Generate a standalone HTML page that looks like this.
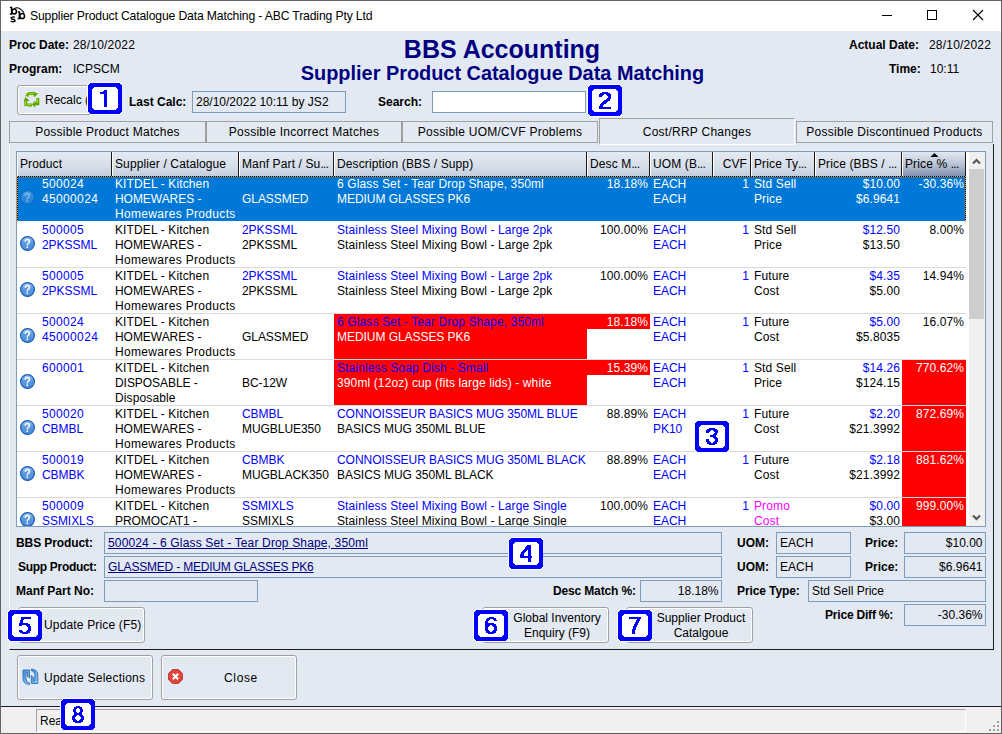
<!DOCTYPE html>
<html><head><meta charset="utf-8"><style>
*{box-sizing:border-box;margin:0;padding:0}
html,body{width:1002px;height:734px;overflow:hidden;background:#E3E9F2}
body{position:relative;font-family:"Liberation Sans",sans-serif;font-size:12px;color:#000;line-height:15px}
.a{position:absolute;white-space:nowrap}
.b{font-weight:bold}
.tbox{position:absolute;border:1px solid #7F9DB9;height:22px;padding:0 0 0 3px;line-height:20px;white-space:nowrap;overflow:hidden}
.btn{position:absolute;border:1px solid #a0a0a0;border-radius:3px;background:#E3E9F2;box-shadow:inset 0 0 0 1px #fff}
.badge{position:absolute;width:34px;height:31px;background:#00f;border-radius:4px;box-shadow:0 0 0 1px #fff}
.badge i{position:absolute;left:4px;top:4px;width:26px;height:23px;background:#fff;border-radius:3px;font-style:normal;color:#00f;font-weight:bold;font-size:23px;line-height:23px;text-align:center}
.tab{position:absolute;height:22px;border:1px solid #a0a0a0;background:#E3E9F2;text-align:center;line-height:20px;letter-spacing:0.25px}
.hd{position:absolute;top:0;height:24px;line-height:23px;padding-left:4px;border-right:1px solid #1e1e1e;overflow:hidden;white-space:nowrap}
.cell{position:absolute;overflow:hidden;white-space:nowrap;line-height:15px}
.bl{color:#0000ff}
.mg{color:#ff00ff}
.r{text-align:right}
</style></head><body>
<div class="a" style="left:0px;top:0px;width:1002px;height:734px;background:#E3E9F2"></div>
<div class="a" style="left:0px;top:0px;width:1002px;height:31px;background:#fff"></div>
<div class="a" style="left:0px;top:0px;width:1002px;height:1px;background:#646464"></div>
<div class="a" style="left:0px;top:0px;width:1px;height:734px;background:#646464"></div>
<div class="a" style="left:1001px;top:0px;width:1px;height:734px;background:#646464"></div>
<div class="a" style="left:0px;top:733px;width:1002px;height:1px;background:#646464"></div>
<div class="a " style="left:30px;top:8.5px;font-size:12.2px;letter-spacing:-0.15px">Supplier Product Catalogue Data Matching - ABC Trading Pty Ltd</div>
<svg class="a" style="left:0px;top:0px" width="30" height="30" viewBox="0 0 30 30">
<g fill="none" stroke="#000" stroke-width="1.5">
<path d="M11.6 7 V14.3 M9.9 7.6 H12.3 M9.9 14.1 H12.3"/><ellipse cx="14.2" cy="11.5" rx="2.2" ry="2.5"/>
<path d="M19.4 11.3 V18.7 M17.7 11.9 H20.1 M17.7 18.5 H20.1"/><ellipse cx="22.2" cy="16" rx="2.3" ry="2.6"/>
<path d="M15 17.3 Q13 16.3 11.3 17.5 Q10.8 19 13 19.3 Q15.3 19.7 15 21 Q13.5 22.4 10.6 21.2" stroke-width="1.4"/>
<path d="M14.3 8.6 Q18.5 5.6 24 12.6" stroke-width="1.1"/>
</g>
</svg>
<div class="a" style="left:882px;top:15px;width:10px;height:1px;background:#000"></div>
<div class="a" style="left:927px;top:10px;width:10px;height:10px;border:1px solid #000"></div>
<svg class="a" style="left:972px;top:9px" width="12" height="12" viewBox="0 0 12 12"><path d="M1 1L11 11M11 1L1 11" stroke="#000" stroke-width="1.1"/></svg>
<div class="a b" style="left:9px;top:38px;">Proc Date:</div>
<div class="a " style="left:73px;top:38px;letter-spacing:0.2px">28/10/2022</div>
<div class="a b" style="left:9px;top:62px;">Program:</div>
<div class="a " style="left:73px;top:62px;">ICPSCM</div>
<div class="a b" style="left:1px;top:35px;width:1002px;text-align:center;font-size:25px;line-height:28px;color:#000080">BBS Accounting</div>
<div class="a b" style="left:1.5px;top:62px;width:1002px;text-align:center;font-size:19.9px;line-height:22px;color:#000080">Supplier Product Catalogue Data Matching</div>
<div class="a b" style="left:849px;top:38px;">Actual Date:</div>
<div class="a " style="left:929px;top:38px;letter-spacing:0.2px">28/10/2022</div>
<div class="a b" style="left:889px;top:62px;">Time:</div>
<div class="a " style="left:930px;top:62px;">10:11</div>
<div class="btn" style="left:17px;top:85px;width:90px;height:30px"></div>
<div class="a " style="left:45px;top:93px;">Recalc (F</div>
<div class="a b" style="left:129px;top:95px;">Last Calc:</div>
<div class="tbox" style="left:192px;top:91px;width:154px;height:22px;padding-left:3px">28/10/2022 10:11 by JS2</div>
<div class="a b" style="left:378px;top:95px;">Search:</div>
<div class="tbox" style="left:432px;top:91px;width:154px;height:22px;background:#fff"></div>
<div class="tab" style="left:9px;top:121px;width:197px">Possible Product Matches</div>
<div class="tab" style="left:206px;top:121px;width:196px">Possible Incorrect Matches</div>
<div class="tab" style="left:402px;top:121px;width:196px">Possible UOM/CVF Problems</div>
<div class="tab" style="left:599px;top:118px;width:196px;height:27px;line-height:26px;border-right-color:#fff;border-bottom-color:#fff;z-index:2">Cost/RRP Changes</div>
<div class="tab" style="left:796px;top:121px;width:197px">Possible Discontinued Products</div>
<div class="a" style="left:9px;top:144px;width:985px;height:506px;border-left:1px solid #fff;border-right:1px solid #1e1e1e;border-bottom:1px solid #1e1e1e"></div>
<div class="a" style="left:16px;top:151px;width:970px;height:376px;background:#fff;border:1px solid #7F9DB9"></div>
<div class="a" style="left:17px;top:152px;width:95px;height:24px;background:linear-gradient(#E4EAF2,#D6DEE9 60%,#C3CEDD);border-left:1px solid #fff;overflow:hidden"></div>
<div class="a" style="left:17px;top:152px;width:94px;height:24px;line-height:24px;padding-left:3px;letter-spacing:0.12px;">Product</div>
<div class="a" style="left:111px;top:152px;width:1px;height:24px;background:#1a1a1a"></div>
<div class="a" style="left:112px;top:152px;width:127px;height:24px;background:linear-gradient(#E4EAF2,#D6DEE9 60%,#C3CEDD);border-left:1px solid #fff;overflow:hidden"></div>
<div class="a" style="left:112px;top:152px;width:126px;height:24px;line-height:24px;padding-left:3px;letter-spacing:0.12px;">Supplier / Catalogue</div>
<div class="a" style="left:238px;top:152px;width:1px;height:24px;background:#1a1a1a"></div>
<div class="a" style="left:239px;top:152px;width:95px;height:24px;background:linear-gradient(#E4EAF2,#D6DEE9 60%,#C3CEDD);border-left:1px solid #fff;overflow:hidden"></div>
<div class="a" style="left:239px;top:152px;width:94px;height:24px;line-height:24px;padding-left:3px;letter-spacing:0.12px;">Manf Part / Su<span style="letter-spacing:-0.6px">...</span></div>
<div class="a" style="left:333px;top:152px;width:1px;height:24px;background:#1a1a1a"></div>
<div class="a" style="left:334px;top:152px;width:253px;height:24px;background:linear-gradient(#E4EAF2,#D6DEE9 60%,#C3CEDD);border-left:1px solid #fff;overflow:hidden"></div>
<div class="a" style="left:334px;top:152px;width:252px;height:24px;line-height:24px;padding-left:3px;letter-spacing:0.12px;">Description (BBS / Supp)</div>
<div class="a" style="left:586px;top:152px;width:1px;height:24px;background:#1a1a1a"></div>
<div class="a" style="left:587px;top:152px;width:63px;height:24px;background:linear-gradient(#E4EAF2,#D6DEE9 60%,#C3CEDD);border-left:1px solid #fff;overflow:hidden"></div>
<div class="a" style="left:587px;top:152px;width:62px;height:24px;line-height:24px;padding-left:3px;letter-spacing:0.12px;">Desc M<span style="letter-spacing:-0.6px">...</span></div>
<div class="a" style="left:649px;top:152px;width:1px;height:24px;background:#1a1a1a"></div>
<div class="a" style="left:650px;top:152px;width:63px;height:24px;background:linear-gradient(#E4EAF2,#D6DEE9 60%,#C3CEDD);border-left:1px solid #fff;overflow:hidden"></div>
<div class="a" style="left:650px;top:152px;width:62px;height:24px;line-height:24px;padding-left:3px;letter-spacing:0.12px;">UOM (B<span style="letter-spacing:-0.6px">...</span></div>
<div class="a" style="left:712px;top:152px;width:1px;height:24px;background:#1a1a1a"></div>
<div class="a" style="left:713px;top:152px;width:38px;height:24px;background:linear-gradient(#E4EAF2,#D6DEE9 60%,#C3CEDD);border-left:1px solid #fff;overflow:hidden"></div>
<div class="a" style="left:713px;top:152px;width:37px;height:24px;line-height:24px;padding-left:3px;letter-spacing:0.12px;text-align:right;padding-right:3px;padding-left:0">CVF</div>
<div class="a" style="left:750px;top:152px;width:1px;height:24px;background:#1a1a1a"></div>
<div class="a" style="left:751px;top:152px;width:64px;height:24px;background:linear-gradient(#E4EAF2,#D6DEE9 60%,#C3CEDD);border-left:1px solid #fff;overflow:hidden"></div>
<div class="a" style="left:751px;top:152px;width:63px;height:24px;line-height:24px;padding-left:3px;letter-spacing:0.12px;">Price Ty<span style="letter-spacing:-0.6px">...</span></div>
<div class="a" style="left:814px;top:152px;width:1px;height:24px;background:#1a1a1a"></div>
<div class="a" style="left:815px;top:152px;width:87px;height:24px;background:linear-gradient(#E4EAF2,#D6DEE9 60%,#C3CEDD);border-left:1px solid #fff;overflow:hidden"></div>
<div class="a" style="left:815px;top:152px;width:86px;height:24px;line-height:24px;padding-left:3px;letter-spacing:0.12px;">Price (BBS / <span style="letter-spacing:-0.6px">...</span></div>
<div class="a" style="left:901px;top:152px;width:1px;height:24px;background:#1a1a1a"></div>
<div class="a" style="left:902px;top:152px;width:64px;height:24px;background:linear-gradient(#E2E8F0,#BAC5D5 50%,#8292AD);border-left:1px solid #fff;overflow:hidden"></div>
<div class="a" style="left:902px;top:152px;width:63px;height:24px;line-height:24px;padding-left:3px;letter-spacing:0.12px;">Price % <span style="letter-spacing:-0.6px">...</span></div>
<div class="a" style="left:965px;top:152px;width:1px;height:24px;background:#1a1a1a"></div>
<svg class="a" style="left:930px;top:152px" width="9" height="6"><path d="M0.5 5L4.5 1L8.5 5Z" fill="#000"/></svg>
<div class="a" style="left:17px;top:176px;width:969px;height:350px;overflow:hidden">
<div class="a" style="left:0px;top:0px;width:949px;height:45px;background:#0078D7"></div>
<svg class="a" style="left:3px;top:14px;opacity:0.5;" width="16" height="16" viewBox="0 0 16 16"><defs><linearGradient id="qg0" x1="0" y1="0" x2="0" y2="1"><stop offset="0" stop-color="#9CC4EE"/><stop offset="0.45" stop-color="#5A9BE0"/><stop offset="1" stop-color="#4A8AD6"/></linearGradient></defs><circle cx="7.5" cy="7.5" r="6.9" fill="url(#qg0)" stroke="#1A5CB8" stroke-width="1.2"/><path d="M5.2 5.8 Q5.2 3.6 7.3 3.6 Q9.4 3.6 9.4 5.6 Q9.4 6.9 8 7.7 Q7.3 8.1 7.3 9.4" fill="none" stroke="#fff" stroke-width="1.5"/><rect x="6.5" y="10.4" width="1.6" height="1.7" fill="#fff"/></svg>
<div class="a" style="left:25px;top:1px;color:#fff;letter-spacing:0.35px">500024</div>
<div class="a" style="left:25px;top:16px;color:#fff;letter-spacing:0.35px">45000024</div>
<div class="a" style="left:98px;top:1px;color:#fff;letter-spacing:0.12px">KITDEL - Kitchen</div>
<div class="a" style="left:98px;top:16px;color:#fff;letter-spacing:-0.05px">HOMEWARES -</div>
<div class="a" style="left:98px;top:31px;color:#fff;letter-spacing:0.33px">Homewares Products</div>
<div class="a" style="left:225px;top:16px;color:#fff;letter-spacing:-0.05px">GLASSMED</div>
<div class="a" style="left:320px;top:1px;color:#fff;letter-spacing:0.12px">6 Glass Set - Tear Drop Shape, 350ml</div>
<div class="a" style="left:320px;top:16px;color:#fff;letter-spacing:-0.05px">MEDIUM GLASSES PK6</div>
<div class="a" style="left:570px;width:61px;text-align:right;top:1px;color:#fff;letter-spacing:0.1px">18.18%</div>
<div class="a" style="left:636px;top:1px;color:#fff;letter-spacing:-0.05px">EACH</div>
<div class="a" style="left:636px;top:16px;color:#fff;letter-spacing:-0.05px">EACH</div>
<div class="a" style="left:696px;width:36px;text-align:right;top:1px;color:#fff;letter-spacing:0.1px">1</div>
<div class="a" style="left:737px;top:1px;color:#fff;letter-spacing:0.12px">Std Sell</div>
<div class="a" style="left:737px;top:16px;color:#fff;letter-spacing:0.12px">Price</div>
<div class="a" style="left:798px;width:85px;text-align:right;top:1px;color:#fff;letter-spacing:0.1px">$10.00</div>
<div class="a" style="left:798px;width:85px;text-align:right;top:16px;color:#fff;letter-spacing:0.1px">$6.9641</div>
<div class="a" style="left:885px;width:62px;text-align:right;top:1px;color:#fff;letter-spacing:0.1px">-30.36%</div>
<div class="a" style="left:0px;top:91px;width:949px;height:1px;background:#dadada"></div>
<svg class="a" style="left:3px;top:60px;" width="16" height="16" viewBox="0 0 16 16"><defs><linearGradient id="qg1" x1="0" y1="0" x2="0" y2="1"><stop offset="0" stop-color="#9CC4EE"/><stop offset="0.45" stop-color="#5A9BE0"/><stop offset="1" stop-color="#4A8AD6"/></linearGradient></defs><circle cx="7.5" cy="7.5" r="6.9" fill="url(#qg1)" stroke="#1A5CB8" stroke-width="1.2"/><path d="M5.2 5.8 Q5.2 3.6 7.3 3.6 Q9.4 3.6 9.4 5.6 Q9.4 6.9 8 7.7 Q7.3 8.1 7.3 9.4" fill="none" stroke="#fff" stroke-width="1.5"/><rect x="6.5" y="10.4" width="1.6" height="1.7" fill="#fff"/></svg>
<div class="a" style="left:25px;top:47px;color:#0000ff;letter-spacing:0.35px">500005</div>
<div class="a" style="left:25px;top:62px;color:#0000ff;letter-spacing:-0.05px">2PKSSML</div>
<div class="a" style="left:98px;top:47px;color:#000;letter-spacing:0.12px">KITDEL - Kitchen</div>
<div class="a" style="left:98px;top:62px;color:#000;letter-spacing:-0.05px">HOMEWARES -</div>
<div class="a" style="left:98px;top:77px;color:#000;letter-spacing:0.33px">Homewares Products</div>
<div class="a" style="left:225px;top:47px;color:#0000ff;letter-spacing:-0.05px">2PKSSML</div>
<div class="a" style="left:225px;top:62px;color:#000;letter-spacing:-0.05px">2PKSSML</div>
<div class="a" style="left:320px;top:47px;color:#0000ff;letter-spacing:0.12px">Stainless Steel Mixing Bowl - Large 2pk</div>
<div class="a" style="left:320px;top:62px;color:#000;letter-spacing:0.12px">Stainless Steel Mixing Bowl - Large 2pk</div>
<div class="a" style="left:570px;width:61px;text-align:right;top:47px;color:#000;letter-spacing:0.1px">100.00%</div>
<div class="a" style="left:636px;top:47px;color:#0000ff;letter-spacing:-0.05px">EACH</div>
<div class="a" style="left:636px;top:62px;color:#0000ff;letter-spacing:-0.05px">EACH</div>
<div class="a" style="left:696px;width:36px;text-align:right;top:47px;color:#0000ff;letter-spacing:0.1px">1</div>
<div class="a" style="left:737px;top:47px;color:#000;letter-spacing:0.12px">Std Sell</div>
<div class="a" style="left:737px;top:62px;color:#000;letter-spacing:0.12px">Price</div>
<div class="a" style="left:798px;width:85px;text-align:right;top:47px;color:#0000ff;letter-spacing:0.1px">$12.50</div>
<div class="a" style="left:798px;width:85px;text-align:right;top:62px;color:#000;letter-spacing:0.1px">$13.50</div>
<div class="a" style="left:885px;width:62px;text-align:right;top:47px;color:#000;letter-spacing:0.1px">8.00%</div>
<div class="a" style="left:0px;top:137px;width:949px;height:1px;background:#dadada"></div>
<svg class="a" style="left:3px;top:106px;" width="16" height="16" viewBox="0 0 16 16"><defs><linearGradient id="qg2" x1="0" y1="0" x2="0" y2="1"><stop offset="0" stop-color="#9CC4EE"/><stop offset="0.45" stop-color="#5A9BE0"/><stop offset="1" stop-color="#4A8AD6"/></linearGradient></defs><circle cx="7.5" cy="7.5" r="6.9" fill="url(#qg2)" stroke="#1A5CB8" stroke-width="1.2"/><path d="M5.2 5.8 Q5.2 3.6 7.3 3.6 Q9.4 3.6 9.4 5.6 Q9.4 6.9 8 7.7 Q7.3 8.1 7.3 9.4" fill="none" stroke="#fff" stroke-width="1.5"/><rect x="6.5" y="10.4" width="1.6" height="1.7" fill="#fff"/></svg>
<div class="a" style="left:25px;top:93px;color:#0000ff;letter-spacing:0.35px">500005</div>
<div class="a" style="left:25px;top:108px;color:#0000ff;letter-spacing:-0.05px">2PKSSML</div>
<div class="a" style="left:98px;top:93px;color:#000;letter-spacing:0.12px">KITDEL - Kitchen</div>
<div class="a" style="left:98px;top:108px;color:#000;letter-spacing:-0.05px">HOMEWARES -</div>
<div class="a" style="left:98px;top:123px;color:#000;letter-spacing:0.33px">Homewares Products</div>
<div class="a" style="left:225px;top:93px;color:#0000ff;letter-spacing:-0.05px">2PKSSML</div>
<div class="a" style="left:225px;top:108px;color:#000;letter-spacing:-0.05px">2PKSSML</div>
<div class="a" style="left:320px;top:93px;color:#0000ff;letter-spacing:0.12px">Stainless Steel Mixing Bowl - Large 2pk</div>
<div class="a" style="left:320px;top:108px;color:#000;letter-spacing:0.12px">Stainless Steel Mixing Bowl - Large 2pk</div>
<div class="a" style="left:570px;width:61px;text-align:right;top:93px;color:#000;letter-spacing:0.1px">100.00%</div>
<div class="a" style="left:636px;top:93px;color:#0000ff;letter-spacing:-0.05px">EACH</div>
<div class="a" style="left:636px;top:108px;color:#0000ff;letter-spacing:-0.05px">EACH</div>
<div class="a" style="left:696px;width:36px;text-align:right;top:93px;color:#0000ff;letter-spacing:0.1px">1</div>
<div class="a" style="left:737px;top:93px;color:#000;letter-spacing:0.12px">Future</div>
<div class="a" style="left:737px;top:108px;color:#000;letter-spacing:0.12px">Cost</div>
<div class="a" style="left:798px;width:85px;text-align:right;top:93px;color:#0000ff;letter-spacing:0.1px">$4.35</div>
<div class="a" style="left:798px;width:85px;text-align:right;top:108px;color:#000;letter-spacing:0.1px">$5.00</div>
<div class="a" style="left:885px;width:62px;text-align:right;top:93px;color:#000;letter-spacing:0.1px">14.94%</div>
<div class="a" style="left:0px;top:183px;width:949px;height:1px;background:#dadada"></div>
<svg class="a" style="left:3px;top:152px;" width="16" height="16" viewBox="0 0 16 16"><defs><linearGradient id="qg3" x1="0" y1="0" x2="0" y2="1"><stop offset="0" stop-color="#9CC4EE"/><stop offset="0.45" stop-color="#5A9BE0"/><stop offset="1" stop-color="#4A8AD6"/></linearGradient></defs><circle cx="7.5" cy="7.5" r="6.9" fill="url(#qg3)" stroke="#1A5CB8" stroke-width="1.2"/><path d="M5.2 5.8 Q5.2 3.6 7.3 3.6 Q9.4 3.6 9.4 5.6 Q9.4 6.9 8 7.7 Q7.3 8.1 7.3 9.4" fill="none" stroke="#fff" stroke-width="1.5"/><rect x="6.5" y="10.4" width="1.6" height="1.7" fill="#fff"/></svg>
<div class="a" style="left:25px;top:139px;color:#0000ff;letter-spacing:0.35px">500024</div>
<div class="a" style="left:25px;top:154px;color:#0000ff;letter-spacing:0.35px">45000024</div>
<div class="a" style="left:98px;top:139px;color:#000;letter-spacing:0.12px">KITDEL - Kitchen</div>
<div class="a" style="left:98px;top:154px;color:#000;letter-spacing:-0.05px">HOMEWARES -</div>
<div class="a" style="left:98px;top:169px;color:#000;letter-spacing:0.33px">Homewares Products</div>
<div class="a" style="left:225px;top:154px;color:#000;letter-spacing:-0.05px">GLASSMED</div>
<div class="a" style="left:317px;top:138px;width:253px;height:45px;background:#ff0000"></div>
<div class="a" style="left:320px;top:139px;color:#0000ff;letter-spacing:0.12px">6 Glass Set - Tear Drop Shape, 350ml</div>
<div class="a" style="left:320px;top:154px;color:#fff;letter-spacing:-0.05px">MEDIUM GLASSES PK6</div>
<div class="a" style="left:570px;top:138px;width:63px;height:15px;background:#ff0000"></div>
<div class="a" style="left:570px;width:61px;text-align:right;top:139px;color:#fff;letter-spacing:0.1px">18.18%</div>
<div class="a" style="left:636px;top:139px;color:#0000ff;letter-spacing:-0.05px">EACH</div>
<div class="a" style="left:636px;top:154px;color:#0000ff;letter-spacing:-0.05px">EACH</div>
<div class="a" style="left:696px;width:36px;text-align:right;top:139px;color:#0000ff;letter-spacing:0.1px">1</div>
<div class="a" style="left:737px;top:139px;color:#000;letter-spacing:0.12px">Future</div>
<div class="a" style="left:737px;top:154px;color:#000;letter-spacing:0.12px">Cost</div>
<div class="a" style="left:798px;width:85px;text-align:right;top:139px;color:#0000ff;letter-spacing:0.1px">$5.00</div>
<div class="a" style="left:798px;width:85px;text-align:right;top:154px;color:#000;letter-spacing:0.1px">$5.8035</div>
<div class="a" style="left:885px;width:62px;text-align:right;top:139px;color:#000;letter-spacing:0.1px">16.07%</div>
<div class="a" style="left:0px;top:229px;width:949px;height:1px;background:#dadada"></div>
<svg class="a" style="left:3px;top:198px;" width="16" height="16" viewBox="0 0 16 16"><defs><linearGradient id="qg4" x1="0" y1="0" x2="0" y2="1"><stop offset="0" stop-color="#9CC4EE"/><stop offset="0.45" stop-color="#5A9BE0"/><stop offset="1" stop-color="#4A8AD6"/></linearGradient></defs><circle cx="7.5" cy="7.5" r="6.9" fill="url(#qg4)" stroke="#1A5CB8" stroke-width="1.2"/><path d="M5.2 5.8 Q5.2 3.6 7.3 3.6 Q9.4 3.6 9.4 5.6 Q9.4 6.9 8 7.7 Q7.3 8.1 7.3 9.4" fill="none" stroke="#fff" stroke-width="1.5"/><rect x="6.5" y="10.4" width="1.6" height="1.7" fill="#fff"/></svg>
<div class="a" style="left:25px;top:185px;color:#0000ff;letter-spacing:0.35px">600001</div>
<div class="a" style="left:98px;top:185px;color:#000;letter-spacing:0.12px">KITDEL - Kitchen</div>
<div class="a" style="left:98px;top:200px;color:#000;letter-spacing:-0.05px">DISPOSABLE -</div>
<div class="a" style="left:98px;top:215px;color:#000;letter-spacing:0.12px">Disposable</div>
<div class="a" style="left:225px;top:200px;color:#000;letter-spacing:-0.05px">BC-12W</div>
<div class="a" style="left:317px;top:184px;width:253px;height:45px;background:#ff0000"></div>
<div class="a" style="left:320px;top:185px;color:#0000ff;letter-spacing:0.12px">Stainless Soap Dish - Small</div>
<div class="a" style="left:320px;top:200px;color:#fff;letter-spacing:0.12px">390ml (12oz) cup (fits large lids) - white</div>
<div class="a" style="left:570px;top:184px;width:63px;height:15px;background:#ff0000"></div>
<div class="a" style="left:570px;width:61px;text-align:right;top:185px;color:#fff;letter-spacing:0.1px">15.39%</div>
<div class="a" style="left:636px;top:185px;color:#0000ff;letter-spacing:-0.05px">EACH</div>
<div class="a" style="left:636px;top:200px;color:#0000ff;letter-spacing:-0.05px">EACH</div>
<div class="a" style="left:696px;width:36px;text-align:right;top:185px;color:#0000ff;letter-spacing:0.1px">1</div>
<div class="a" style="left:737px;top:185px;color:#000;letter-spacing:0.12px">Std Sell</div>
<div class="a" style="left:737px;top:200px;color:#000;letter-spacing:0.12px">Price</div>
<div class="a" style="left:798px;width:85px;text-align:right;top:185px;color:#0000ff;letter-spacing:0.1px">$14.26</div>
<div class="a" style="left:798px;width:85px;text-align:right;top:200px;color:#000;letter-spacing:0.1px">$124.15</div>
<div class="a" style="left:885px;top:184px;width:64px;height:45px;background:#ff0000"></div>
<div class="a" style="left:885px;width:62px;text-align:right;top:185px;color:#fff;letter-spacing:0.1px">770.62%</div>
<div class="a" style="left:0px;top:275px;width:949px;height:1px;background:#dadada"></div>
<svg class="a" style="left:3px;top:244px;" width="16" height="16" viewBox="0 0 16 16"><defs><linearGradient id="qg5" x1="0" y1="0" x2="0" y2="1"><stop offset="0" stop-color="#9CC4EE"/><stop offset="0.45" stop-color="#5A9BE0"/><stop offset="1" stop-color="#4A8AD6"/></linearGradient></defs><circle cx="7.5" cy="7.5" r="6.9" fill="url(#qg5)" stroke="#1A5CB8" stroke-width="1.2"/><path d="M5.2 5.8 Q5.2 3.6 7.3 3.6 Q9.4 3.6 9.4 5.6 Q9.4 6.9 8 7.7 Q7.3 8.1 7.3 9.4" fill="none" stroke="#fff" stroke-width="1.5"/><rect x="6.5" y="10.4" width="1.6" height="1.7" fill="#fff"/></svg>
<div class="a" style="left:25px;top:231px;color:#0000ff;letter-spacing:0.35px">500020</div>
<div class="a" style="left:25px;top:246px;color:#0000ff;letter-spacing:-0.05px">CBMBL</div>
<div class="a" style="left:98px;top:231px;color:#000;letter-spacing:0.12px">KITDEL - Kitchen</div>
<div class="a" style="left:98px;top:246px;color:#000;letter-spacing:-0.05px">HOMEWARES -</div>
<div class="a" style="left:98px;top:261px;color:#000;letter-spacing:0.33px">Homewares Products</div>
<div class="a" style="left:225px;top:231px;color:#0000ff;letter-spacing:-0.05px">CBMBL</div>
<div class="a" style="left:225px;top:246px;color:#000;letter-spacing:-0.05px">MUGBLUE350</div>
<div class="a" style="left:320px;top:231px;color:#0000ff;letter-spacing:-0.05px">CONNOISSEUR BASICS MUG 350ML BLUE</div>
<div class="a" style="left:320px;top:246px;color:#000;letter-spacing:-0.05px">BASICS MUG 350ML BLUE</div>
<div class="a" style="left:570px;width:61px;text-align:right;top:231px;color:#000;letter-spacing:0.1px">88.89%</div>
<div class="a" style="left:636px;top:231px;color:#0000ff;letter-spacing:-0.05px">EACH</div>
<div class="a" style="left:636px;top:246px;color:#0000ff;letter-spacing:-0.05px">PK10</div>
<div class="a" style="left:696px;width:36px;text-align:right;top:231px;color:#0000ff;letter-spacing:0.1px">1</div>
<div class="a" style="left:737px;top:231px;color:#000;letter-spacing:0.12px">Future</div>
<div class="a" style="left:737px;top:246px;color:#000;letter-spacing:0.12px">Cost</div>
<div class="a" style="left:798px;width:85px;text-align:right;top:231px;color:#0000ff;letter-spacing:0.1px">$2.20</div>
<div class="a" style="left:798px;width:85px;text-align:right;top:246px;color:#000;letter-spacing:0.1px">$21.3992</div>
<div class="a" style="left:885px;top:230px;width:64px;height:45px;background:#ff0000"></div>
<div class="a" style="left:885px;width:62px;text-align:right;top:231px;color:#fff;letter-spacing:0.1px">872.69%</div>
<div class="a" style="left:0px;top:321px;width:949px;height:1px;background:#dadada"></div>
<svg class="a" style="left:3px;top:290px;" width="16" height="16" viewBox="0 0 16 16"><defs><linearGradient id="qg6" x1="0" y1="0" x2="0" y2="1"><stop offset="0" stop-color="#9CC4EE"/><stop offset="0.45" stop-color="#5A9BE0"/><stop offset="1" stop-color="#4A8AD6"/></linearGradient></defs><circle cx="7.5" cy="7.5" r="6.9" fill="url(#qg6)" stroke="#1A5CB8" stroke-width="1.2"/><path d="M5.2 5.8 Q5.2 3.6 7.3 3.6 Q9.4 3.6 9.4 5.6 Q9.4 6.9 8 7.7 Q7.3 8.1 7.3 9.4" fill="none" stroke="#fff" stroke-width="1.5"/><rect x="6.5" y="10.4" width="1.6" height="1.7" fill="#fff"/></svg>
<div class="a" style="left:25px;top:277px;color:#0000ff;letter-spacing:0.35px">500019</div>
<div class="a" style="left:25px;top:292px;color:#0000ff;letter-spacing:-0.05px">CBMBK</div>
<div class="a" style="left:98px;top:277px;color:#000;letter-spacing:0.12px">KITDEL - Kitchen</div>
<div class="a" style="left:98px;top:292px;color:#000;letter-spacing:-0.05px">HOMEWARES -</div>
<div class="a" style="left:98px;top:307px;color:#000;letter-spacing:0.33px">Homewares Products</div>
<div class="a" style="left:225px;top:277px;color:#0000ff;letter-spacing:-0.05px">CBMBK</div>
<div class="a" style="left:225px;top:292px;color:#000;letter-spacing:-0.05px">MUGBLACK350</div>
<div class="a" style="left:320px;top:277px;color:#0000ff;letter-spacing:-0.05px">CONNOISSEUR BASICS MUG 350ML BLACK</div>
<div class="a" style="left:320px;top:292px;color:#000;letter-spacing:-0.05px">BASICS MUG 350ML BLACK</div>
<div class="a" style="left:570px;width:61px;text-align:right;top:277px;color:#000;letter-spacing:0.1px">88.89%</div>
<div class="a" style="left:636px;top:277px;color:#0000ff;letter-spacing:-0.05px">EACH</div>
<div class="a" style="left:636px;top:292px;color:#0000ff;letter-spacing:-0.05px">EACH</div>
<div class="a" style="left:696px;width:36px;text-align:right;top:277px;color:#0000ff;letter-spacing:0.1px">1</div>
<div class="a" style="left:737px;top:277px;color:#000;letter-spacing:0.12px">Future</div>
<div class="a" style="left:737px;top:292px;color:#000;letter-spacing:0.12px">Cost</div>
<div class="a" style="left:798px;width:85px;text-align:right;top:277px;color:#0000ff;letter-spacing:0.1px">$2.18</div>
<div class="a" style="left:798px;width:85px;text-align:right;top:292px;color:#000;letter-spacing:0.1px">$21.3992</div>
<div class="a" style="left:885px;top:276px;width:64px;height:45px;background:#ff0000"></div>
<div class="a" style="left:885px;width:62px;text-align:right;top:277px;color:#fff;letter-spacing:0.1px">881.62%</div>
<div class="a" style="left:0px;top:367px;width:949px;height:1px;background:#dadada"></div>
<svg class="a" style="left:3px;top:336px;" width="16" height="16" viewBox="0 0 16 16"><defs><linearGradient id="qg7" x1="0" y1="0" x2="0" y2="1"><stop offset="0" stop-color="#9CC4EE"/><stop offset="0.45" stop-color="#5A9BE0"/><stop offset="1" stop-color="#4A8AD6"/></linearGradient></defs><circle cx="7.5" cy="7.5" r="6.9" fill="url(#qg7)" stroke="#1A5CB8" stroke-width="1.2"/><path d="M5.2 5.8 Q5.2 3.6 7.3 3.6 Q9.4 3.6 9.4 5.6 Q9.4 6.9 8 7.7 Q7.3 8.1 7.3 9.4" fill="none" stroke="#fff" stroke-width="1.5"/><rect x="6.5" y="10.4" width="1.6" height="1.7" fill="#fff"/></svg>
<div class="a" style="left:25px;top:323px;color:#0000ff;letter-spacing:0.35px">500009</div>
<div class="a" style="left:25px;top:338px;color:#0000ff;letter-spacing:-0.05px">SSMIXLS</div>
<div class="a" style="left:98px;top:323px;color:#000;letter-spacing:0.12px">KITDEL - Kitchen</div>
<div class="a" style="left:98px;top:338px;color:#000;letter-spacing:-0.05px">PROMOCAT1 -</div>
<div class="a" style="left:225px;top:323px;color:#0000ff;letter-spacing:-0.05px">SSMIXLS</div>
<div class="a" style="left:225px;top:338px;color:#000;letter-spacing:-0.05px">SSMIXLS</div>
<div class="a" style="left:320px;top:323px;color:#0000ff;letter-spacing:0.12px">Stainless Steel Mixing Bowl - Large Single</div>
<div class="a" style="left:320px;top:338px;color:#000;letter-spacing:0.12px">Stainless Steel Mixing Bowl - Large Single</div>
<div class="a" style="left:570px;width:61px;text-align:right;top:323px;color:#000;letter-spacing:0.1px">100.00%</div>
<div class="a" style="left:636px;top:323px;color:#0000ff;letter-spacing:-0.05px">EACH</div>
<div class="a" style="left:636px;top:338px;color:#0000ff;letter-spacing:-0.05px">EACH</div>
<div class="a" style="left:696px;width:36px;text-align:right;top:323px;color:#0000ff;letter-spacing:0.1px">1</div>
<div class="a" style="left:737px;top:323px;color:#ff00ff;letter-spacing:0.12px">Promo</div>
<div class="a" style="left:737px;top:338px;color:#ff00ff;letter-spacing:0.12px">Cost</div>
<div class="a" style="left:798px;width:85px;text-align:right;top:323px;color:#0000ff;letter-spacing:0.1px">$0.00</div>
<div class="a" style="left:798px;width:85px;text-align:right;top:338px;color:#000;letter-spacing:0.1px">$3.00</div>
<div class="a" style="left:885px;top:322px;width:64px;height:45px;background:#ff0000"></div>
<div class="a" style="left:885px;width:62px;text-align:right;top:323px;color:#fff;letter-spacing:0.1px">999.00%</div>
</div>
<div class="a" style="left:17px;top:176px;width:949px;height:1px;background:repeating-linear-gradient(90deg,#ff8c00 0 1px,#000 1px 2px)"></div>
<div class="a" style="left:17px;top:176px;width:1px;height:45px;background:repeating-linear-gradient(180deg,#ff8c00 0 1px,#000 1px 2px)"></div>
<div class="a" style="left:965px;top:176px;width:1px;height:45px;background:repeating-linear-gradient(180deg,#ff8c00 0 1px,#000 1px 2px)"></div>
<div class="a" style="left:966px;top:152px;width:19px;height:374px;background:#f0f0f0;border-left:3px solid #fff"></div>
<div class="a" style="left:969px;top:169px;width:15px;height:150px;background:#cdcdcd"></div>
<svg class="a" style="left:972px;top:157px" width="10" height="8"><path d="M1 6.5L4.5 3L8 6.5" fill="none" stroke="#555" stroke-width="2"/></svg>
<svg class="a" style="left:972px;top:514px" width="10" height="8"><path d="M1 1.5L4.5 5L8 1.5" fill="none" stroke="#555" stroke-width="2"/></svg>
<div class="a b" style="left:16px;top:536px;letter-spacing:-0.1px">BBS Product:</div>
<div class="a b" style="left:18px;top:560px;letter-spacing:-0.3px">Supp Product:</div>
<div class="a b" style="left:16px;top:584px;letter-spacing:0px">Manf Part No:</div>
<div class="tbox" style="left:104px;top:532px;width:618px;height:22px;color:#000080;text-decoration:underline;letter-spacing:0.15px">500024 - 6 Glass Set - Tear Drop Shape, 350ml</div>
<div class="tbox" style="left:104px;top:556px;width:618px;height:22px;color:#000080;text-decoration:underline;letter-spacing:-0.2px">GLASSMED - MEDIUM GLASSES PK6</div>
<div class="tbox" style="left:104px;top:580px;width:154px;height:22px"></div>
<div class="a b" style="left:553px;top:584px;letter-spacing:-0.15px">Desc Match %:</div>
<div class="tbox" style="left:640px;top:580px;width:82px;height:22px;text-align:right;padding:0 2.5px 0 0">18.18%</div>
<div class="a b" style="left:737px;top:536px;">UOM:</div>
<div class="a b" style="left:737px;top:560px;">UOM:</div>
<div class="tbox" style="left:776px;top:532px;width:75px;height:22px">EACH</div>
<div class="tbox" style="left:776px;top:556px;width:75px;height:22px">EACH</div>
<div class="a b" style="left:865px;top:536px;">Price:</div>
<div class="a b" style="left:865px;top:560px;">Price:</div>
<div class="tbox" style="left:904px;top:532px;width:82px;height:22px;text-align:right;padding:0 2.5px 0 0">$10.00</div>
<div class="tbox" style="left:904px;top:556px;width:82px;height:22px;text-align:right;padding:0 2.5px 0 0">$6.9641</div>
<div class="a b" style="left:737px;top:584px;letter-spacing:-0.1px">Price Type:</div>
<div class="tbox" style="left:808px;top:580px;width:178px;height:22px">Std Sell Price</div>
<div class="a b" style="left:825px;top:608px;letter-spacing:-0.2px">Price Diff %:</div>
<div class="tbox" style="left:904px;top:604px;width:82px;height:22px;text-align:right;padding:0 2.5px 0 0">-30.36%</div>
<div class="btn" style="left:18px;top:607px;width:127px;height:36px"></div>
<div class="a " style="left:44px;top:618px;letter-spacing:0.16px">Update Price (F5)</div>
<div class="btn" style="left:482px;top:607px;width:127px;height:36px"></div>
<div class="a " style="left:482px;top:611px;width:127px;text-align:center;padding-left:23px">Global Inventory<br>Enquiry (F9)</div>
<div class="btn" style="left:626px;top:607px;width:127px;height:36px"></div>
<div class="a " style="left:626px;top:611px;width:127px;text-align:center;padding-left:23px">Supplier Product<br>Catalgoue</div>
<div class="btn" style="left:17px;top:655px;width:136px;height:45px"></div>
<div class="a " style="left:44px;top:671px;letter-spacing:0.22px">Update Selections</div>
<svg class="a" style="left:18px;top:664px" width="26" height="26" viewBox="0 0 26 26">
<defs><linearGradient id="usg" x1="0" y1="0" x2="1" y2="1"><stop offset="0" stop-color="#3F87CF"/><stop offset="0.6" stop-color="#6FB3EA"/><stop offset="1" stop-color="#9AD2F8"/></linearGradient></defs>
<path d="M5 6 H11.5 V14 L9.5 12 V8.5 H8 V15 Q8 18 11.5 19 V20.5 Q5 20 5 14 Z" fill="url(#usg)" stroke="#2E6FB5" stroke-width="0.9"/>
<path d="M19.8 19.5 H13.3 V11.5 L15.3 13.5 V17 H16.8 V10.5 Q16.8 7.5 13.3 6.5 V5 Q19.8 5.5 19.8 11.5 Z" fill="url(#usg)" stroke="#2E6FB5" stroke-width="0.9"/>
</svg>
<div class="btn" style="left:161px;top:655px;width:136px;height:45px"></div>
<div class="a " style="left:224px;top:671px;letter-spacing:0.65px">Close</div>
<svg class="a" style="left:167px;top:668px" width="17" height="17" viewBox="0 0 17 17">
<path d="M5.5 1.5 H11.5 L15.5 5.5 V11.5 L11.5 15.5 H5.5 L1.5 11.5 V5.5Z" fill="#E2463A" stroke="#A83228" stroke-width="0.8"/>
<path d="M5.8 5.8 L11.2 11.2 M11.2 5.8 L5.8 11.2" stroke="#fff" stroke-width="2.2"/>
</svg>
<svg class="a" style="left:18px;top:86px" width="26" height="26" viewBox="0 0 26 26">
<g fill="none" stroke="#5CA800" stroke-width="3">
<path d="M9 10.5 Q9.5 7.5 12.5 7.5 L16 7.5"/><path d="M7.8 20 L7.8 14.5"/><path d="M9.5 19 H14"/><path d="M19.8 12 V17.8 H16.5"/>
</g>
<g fill="#5CA800"><path d="M15 5.6 L20.2 7.8 L16 11.2Z"/><path d="M5.6 15.5 L7.4 11 L11.6 14.8Z"/><path d="M17.2 14.4 L14 18.4 L17.2 21.6Z"/></g>
<g fill="none" stroke="#B4EA10" stroke-width="1" opacity="0.9"><path d="M10 10 Q10.5 8 13 7.6 L15.5 7.6"/><path d="M7.6 19 L7.6 15"/><path d="M10 18.8 H13.5"/><path d="M19.6 12.8 V17"/></g>
</svg>
<div class="a" style="left:1px;top:706px;width:1000px;height:1px;background:#1e1e1e"></div>
<div class="a" style="left:1px;top:707px;width:1000px;height:26px;background:#f0f0f0"></div>
<div class="a" style="left:36px;top:709px;width:930px;height:23px;border-top:1px solid #a0a0a0;border-left:1px solid #a0a0a0;border-right:1px solid #fff;border-bottom:1px solid #fff"></div>
<div class="a " style="left:40px;top:714px;">Ready</div>
<div class="a" style="left:997px;top:721px;width:2px;height:2px;background:#a0a0a0"></div>
<div class="a" style="left:993px;top:725px;width:2px;height:2px;background:#a0a0a0"></div>
<div class="a" style="left:997px;top:725px;width:2px;height:2px;background:#a0a0a0"></div>
<div class="a" style="left:989px;top:729px;width:2px;height:2px;background:#a0a0a0"></div>
<div class="a" style="left:993px;top:729px;width:2px;height:2px;background:#a0a0a0"></div>
<div class="a" style="left:997px;top:729px;width:2px;height:2px;background:#a0a0a0"></div>
<svg class="a" style="left:87px;top:82px" width="36" height="33" shape-rendering="crispEdges"><path d="M3 0H33V1H34V2H35V31H34V32H33V33H3V32H2V31H1V30H0V3H1V2H2V1H3Z" fill="#fff"/><path d="M3 1H33V2H34V3H35V30H34V31H33V32H3V31H2V30H1V3H2V2H3Z" fill="#0000ff"/><path d="M7 5H29V6H30V7H31V26H30V27H29V28H7V27H6V26H5V7H6V6H7Z" fill="#fff"/><path d="M17 8h3v1h-3zM16 9h4v1h-4zM13 10h7v1h-7zM13 11h7v1h-7zM17 12h3v1h-3zM17 13h3v1h-3zM17 14h3v1h-3zM17 15h3v1h-3zM17 16h3v1h-3zM17 17h3v1h-3zM17 18h3v1h-3zM17 19h3v1h-3zM17 20h3v1h-3zM17 21h3v1h-3zM17 22h3v1h-3zM17 23h3v1h-3zM17 24h3v1h-3z" fill="#0000ff"/></svg>
<svg class="a" style="left:587px;top:84px" width="36" height="33" shape-rendering="crispEdges"><path d="M3 0H33V1H34V2H35V31H34V32H33V33H3V32H2V31H1V30H0V3H1V2H2V1H3Z" fill="#fff"/><path d="M3 1H33V2H34V3H35V30H34V31H33V32H3V31H2V30H1V3H2V2H3Z" fill="#0000ff"/><path d="M7 5H29V6H30V7H31V26H30V27H29V28H7V27H6V26H5V7H6V6H7Z" fill="#fff"/><path d="M15 8h6v1h-6zM13 9h10v1h-10zM12 10h5v1h-5zM19 10h5v1h-5zM12 11h4v1h-4zM20 11h4v1h-4zM12 12h3v1h-3zM21 12h3v1h-3zM21 13h3v1h-3zM20 14h4v1h-4zM19 15h4v1h-4zM17 16h6v1h-6zM16 17h5v1h-5zM15 18h5v1h-5zM14 19h5v1h-5zM13 20h4v1h-4zM13 21h3v1h-3zM12 22h4v1h-4zM12 23h12v1h-12zM12 24h12v1h-12z" fill="#0000ff"/></svg>
<svg class="a" style="left:694px;top:420px" width="36" height="33" shape-rendering="crispEdges"><path d="M3 0H33V1H34V2H35V31H34V32H33V33H3V32H2V31H1V30H0V3H1V2H2V1H3Z" fill="#fff"/><path d="M3 1H33V2H34V3H35V30H34V31H33V32H3V31H2V30H1V3H2V2H3Z" fill="#0000ff"/><path d="M7 5H29V6H30V7H31V26H30V27H29V28H7V27H6V26H5V7H6V6H7Z" fill="#fff"/><path d="M15 8h6v1h-6zM13 9h10v1h-10zM12 10h5v1h-5zM19 10h5v1h-5zM12 11h4v1h-4zM20 11h4v1h-4zM12 12h3v1h-3zM21 12h3v1h-3zM20 13h3v1h-3zM19 14h4v1h-4zM16 15h6v1h-6zM16 16h6v1h-6zM19 17h4v1h-4zM20 18h4v1h-4zM12 19h3v1h-3zM21 19h3v1h-3zM12 20h3v1h-3zM21 20h3v1h-3zM12 21h4v1h-4zM20 21h4v1h-4zM13 22h4v1h-4zM19 22h4v1h-4zM13 23h10v1h-10zM15 24h6v1h-6z" fill="#0000ff"/></svg>
<svg class="a" style="left:508px;top:537px" width="36" height="33" shape-rendering="crispEdges"><path d="M3 0H33V1H34V2H35V31H34V32H33V33H3V32H2V31H1V30H0V3H1V2H2V1H3Z" fill="#fff"/><path d="M3 1H33V2H34V3H35V30H34V31H33V32H3V31H2V30H1V3H2V2H3Z" fill="#0000ff"/><path d="M7 5H29V6H30V7H31V26H30V27H29V28H7V27H6V26H5V7H6V6H7Z" fill="#fff"/><path d="M19 8h4v1h-4zM18 9h5v1h-5zM17 10h6v1h-6zM17 11h6v1h-6zM16 12h7v1h-7zM15 13h4v1h-4zM20 13h3v1h-3zM14 14h4v1h-4zM20 14h3v1h-3zM13 15h4v1h-4zM20 15h3v1h-3zM13 16h3v1h-3zM20 16h3v1h-3zM12 17h4v1h-4zM20 17h3v1h-3zM12 18h4v1h-4zM20 18h3v1h-3zM12 19h12v1h-12zM12 20h12v1h-12zM20 21h3v1h-3zM20 22h3v1h-3zM20 23h3v1h-3zM20 24h3v1h-3z" fill="#0000ff"/></svg>
<svg class="a" style="left:7px;top:609px" width="36" height="33" shape-rendering="crispEdges"><path d="M3 0H33V1H34V2H35V31H34V32H33V33H3V32H2V31H1V30H0V3H1V2H2V1H3Z" fill="#fff"/><path d="M3 1H33V2H34V3H35V30H34V31H33V32H3V31H2V30H1V3H2V2H3Z" fill="#0000ff"/><path d="M7 5H29V6H30V7H31V26H30V27H29V28H7V27H6V26H5V7H6V6H7Z" fill="#fff"/><path d="M14 8h10v1h-10zM14 9h10v1h-10zM14 10h3v1h-3zM13 11h3v1h-3zM13 12h3v1h-3zM13 13h3v1h-3zM12 14h9v1h-9zM12 15h11v1h-11zM12 16h3v1h-3zM19 16h4v1h-4zM20 17h4v1h-4zM21 18h3v1h-3zM21 19h3v1h-3zM21 20h3v1h-3zM12 21h3v1h-3zM20 21h4v1h-4zM12 22h4v1h-4zM19 22h4v1h-4zM13 23h10v1h-10zM15 24h6v1h-6z" fill="#0000ff"/></svg>
<svg class="a" style="left:473px;top:609px" width="36" height="33" shape-rendering="crispEdges"><path d="M3 0H33V1H34V2H35V31H34V32H33V33H3V32H2V31H1V30H0V3H1V2H2V1H3Z" fill="#fff"/><path d="M3 1H33V2H34V3H35V30H34V31H33V32H3V31H2V30H1V3H2V2H3Z" fill="#0000ff"/><path d="M7 5H29V6H30V7H31V26H30V27H29V28H7V27H6V26H5V7H6V6H7Z" fill="#fff"/><path d="M16 8h5v1h-5zM14 9h9v1h-9zM13 10h4v1h-4zM20 10h3v1h-3zM13 11h3v1h-3zM21 11h3v1h-3zM12 12h3v1h-3zM12 13h3v1h-3zM12 14h9v1h-9zM12 15h11v1h-11zM12 16h5v1h-5zM19 16h4v1h-4zM12 17h4v1h-4zM20 17h4v1h-4zM12 18h3v1h-3zM21 18h3v1h-3zM12 19h3v1h-3zM21 19h3v1h-3zM12 20h3v1h-3zM21 20h3v1h-3zM12 21h4v1h-4zM20 21h4v1h-4zM13 22h4v1h-4zM19 22h4v1h-4zM13 23h10v1h-10zM15 24h6v1h-6z" fill="#0000ff"/></svg>
<svg class="a" style="left:617px;top:609px" width="36" height="33" shape-rendering="crispEdges"><path d="M3 0H33V1H34V2H35V31H34V32H33V33H3V32H2V31H1V30H0V3H1V2H2V1H3Z" fill="#fff"/><path d="M3 1H33V2H34V3H35V30H34V31H33V32H3V31H2V30H1V3H2V2H3Z" fill="#0000ff"/><path d="M7 5H29V6H30V7H31V26H30V27H29V28H7V27H6V26H5V7H6V6H7Z" fill="#fff"/><path d="M12 8h12v1h-12zM12 9h12v1h-12zM20 10h3v1h-3zM19 11h4v1h-4zM19 12h3v1h-3zM18 13h4v1h-4zM18 14h3v1h-3zM17 15h4v1h-4zM17 16h3v1h-3zM16 17h4v1h-4zM16 18h3v1h-3zM16 19h3v1h-3zM15 20h4v1h-4zM15 21h3v1h-3zM15 22h3v1h-3zM15 23h3v1h-3zM15 24h3v1h-3z" fill="#0000ff"/></svg>
<svg class="a" style="left:60px;top:698px" width="36" height="33" shape-rendering="crispEdges"><path d="M3 0H33V1H34V2H35V31H34V32H33V33H3V32H2V31H1V30H0V3H1V2H2V1H3Z" fill="#fff"/><path d="M3 1H33V2H34V3H35V30H34V31H33V32H3V31H2V30H1V3H2V2H3Z" fill="#0000ff"/><path d="M7 5H29V6H30V7H31V26H30V27H29V28H7V27H6V26H5V7H6V6H7Z" fill="#fff"/><path d="M16 8h4v1h-4zM14 9h8v1h-8zM14 10h3v1h-3zM19 10h3v1h-3zM13 11h3v1h-3zM20 11h3v1h-3zM13 12h3v1h-3zM20 12h3v1h-3zM13 13h3v1h-3zM20 13h3v1h-3zM14 14h3v1h-3zM19 14h3v1h-3zM14 15h8v1h-8zM14 16h8v1h-8zM13 17h4v1h-4zM19 17h4v1h-4zM12 18h4v1h-4zM20 18h4v1h-4zM12 19h3v1h-3zM21 19h3v1h-3zM12 20h3v1h-3zM21 20h3v1h-3zM12 21h4v1h-4zM20 21h4v1h-4zM13 22h4v1h-4zM19 22h4v1h-4zM13 23h10v1h-10zM15 24h6v1h-6z" fill="#0000ff"/></svg>
</body></html>
